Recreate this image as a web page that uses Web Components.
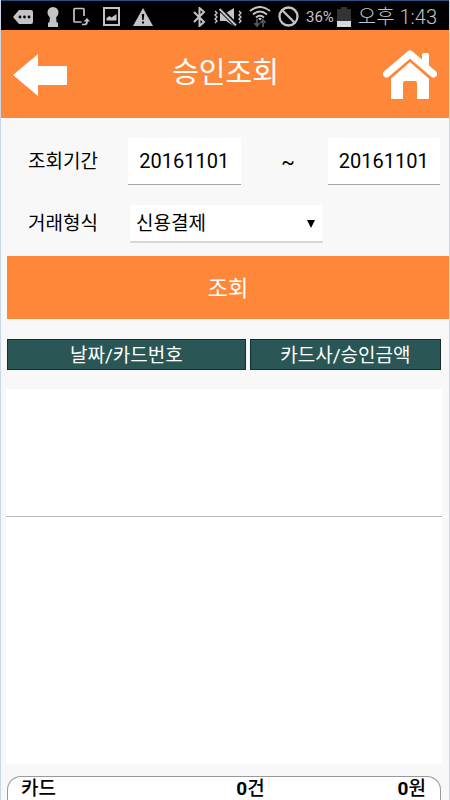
<!DOCTYPE html>
<html lang="ko">
<head>
<meta charset="utf-8">
<meta name="viewport" content="width=device-width, initial-scale=1">
<title>승인조회</title>
<style>
    body {
        margin: 0;
        background: #f8f8f8;
        color: #000;
        font-family: Roboto, "Noto Sans CJK KR", sans-serif;
        font-size: 20px;
    }
</style>
</head>
<body>
<approval-app></approval-app>

<template id="status-bar">
    <style>
        :host {
            display: flex;
            align-items: center;
            justify-content: space-between;
            box-sizing: border-box;
            height: 30px;
            padding: 2px 12px 0;
            background: #000;
            border-top: 1px solid #2a5082;
            color: #c4c4c4;
        }
        .group { display: flex; align-items: center; }
        .left { gap: 13px; }
        .right { gap: 7px; }
        .battery { display: flex; align-items: center; gap: 3px; }
        svg { display: block; fill: #c4c4c4; }
        .percent { font-size: 15px; line-height: 20px; }
        .time { font-size: 20px; line-height: 24px; font-weight: 300; }
    </style>
    <div class="group left">
        <svg width="20" height="14" viewBox="0 0 20 14"><path d="M6 0h12q2 0 2 2v10q0 2-2 2H6L0 7z"/><g fill="#000"><circle cx="7" cy="7" r="1.400"/><circle cx="11.500" cy="7" r="1.400"/><circle cx="16" cy="7" r="1.400"/></g></svg>
        <svg width="14" height="20" viewBox="0 0 14 20"><circle cx="7" cy="5.500" r="5.500"/><path d="M4 8h6l.5 7 1.500 1v4H2v-4l1.500-1z"/></svg>
        <svg width="17" height="19" viewBox="0 0 17 19"><path d="M11 9V2.500a1 1 0 0 0-1-1H2a1 1 0 0 0-1 1V14a1 1 0 0 0 1 1h6.500M9 17.500h2.500q2.500 0 2.500-3v-2" fill="none" stroke="#c4c4c4" stroke-width="1.700"/><path d="M10.500 14.500L14 11l3 3.500z"/></svg>
        <svg width="17" height="19" viewBox="0 0 17 19"><path fill-rule="evenodd" d="M0 0h17v19H0zM2 2v15h13V2z"/><path d="M3.500 13.500V11l3-2 2 1.500L13.500 7v6.500z"/></svg>
        <svg width="20" height="18" viewBox="0 0 20 18"><path d="M10 0l10 18H0z"/><path fill="#000" d="M8.800 6h2.400l-.5 6H9.300zM9 13.500h2v2H9z"/></svg>
    </div>
    <div class="group right">
        <svg width="15" height="20" viewBox="0 0 15 20"><path d="M2 5l10 10-4.500 4V1L12 5 2 15" fill="none" stroke="#c4c4c4" stroke-width="2"/></svg>
        <svg width="28" height="18" viewBox="0 0 28 18"><path d="M6 5h6l8-5v18l-8-5H6z"/><path d="M5 0l18 18" stroke="#000" stroke-width="4.500"/><path d="M5.500 1L22 17.500" stroke="#c4c4c4" stroke-width="2"/><path d="M1 3l2 2-2 2 2 2-2 2 2 2-2 2M25 3l2 2-2 2 2 2-2 2 2 2-2 2" fill="none" stroke="#c4c4c4" stroke-width="1.400"/></svg>
        <svg width="22" height="21" viewBox="0 0 22 21"><g fill="none" stroke="#c4c4c4" stroke-width="2"><path d="M1 5Q11-3 21 5M4 8.500q7-6 14 0M7 11.500q4-3.500 8 0"/></g><path d="M9 12.500q2-1.500 4 0l-2 2z"/><g fill="none" stroke="#555" stroke-width="1.800"><path d="M8 13v7M5.500 17l2.500 3 2.500-3M14 21v-7M11.500 17l2.500-3 2.500 3"/></g></svg>
        <svg width="21" height="21" viewBox="0 0 21 21"><g fill="none" stroke="#c4c4c4" stroke-width="2.300"><circle cx="10.500" cy="10.500" r="9"/><path d="M4 4l13 13"/></g></svg>
        <span class="battery">
            <span class="percent">36%</span>
            <svg width="14" height="20" viewBox="0 0 14 20"><path fill="#333" d="M4 0h6v2h4v18H0V2h4z"/><path fill="#d8d8d8" d="M0 14h14v6H0z"/></svg>
        </span>
        <span class="time">오후 1:43</span>
    </div>
</template>

<template id="title-bar">
    <style>
        :host {
            display: flex;
            align-items: center;
            justify-content: space-between;
            box-sizing: border-box;
            height: 88px;
            padding: 1px 12px 0;
            background: #ff873a;
            color: #fff;
        }
        h1 { margin: 0; font-size: 29px; line-height: 40px; font-weight: 400; padding-bottom: 3px; }
        button { padding: 0; border: 0; background: none; }
        svg { display: block; fill: #fff; }
    </style>
    <button type="button" aria-label="뒤로"><svg width="55" height="42" viewBox="0 0 55 42"><path d="M0 21L25 0v12h29v19H25v11z"/></svg></button>
    <h1><slot></slot></h1>
    <button type="button" aria-label="홈"><svg width="54" height="50" viewBox="0 0 54 50"><path d="M39 11V5q0-2 2-2h3q2 0 2 2v13z"/><path d="M3.500 24L27 4l23.500 20" fill="none" stroke="#fff" stroke-width="7" stroke-linecap="round" stroke-linejoin="round"/><path d="M8 28.500L27 12l19 16.500V48q0 1-1 1H34V33q0-2-2-2H22q-2 0-2 2v16H9q-1 0-1-1z"/><path d="M7 28L27 10.500 47 28" fill="none" stroke="#ff873a" stroke-width="1.800"/></svg></button>
</template>

<template id="search-form">
    <style>
        :host { display: block; padding: 20px 0 0 6px; }
        .row { display: grid; align-items: center; margin-bottom: 20px; padding: 0 9px 0 21px; }
        .period { grid-template-columns: 100px 1fr 87px 1fr; }
        .type { grid-template-columns: 102px 193px; margin-bottom: 13px; }
        label { font-size: 19px; line-height: 28px; }
        input, select {
            box-sizing: border-box;
            width: 100%;
            min-width: 0;
            margin: 0;
            border: 0;
            border-radius: 0;
            background: #fff;
            color: #000;
            font: inherit;
        }
        input { height: 47px; padding: 0; border-bottom: 1px solid #a5a5a5; text-align: center; }
        .tilde { padding-left: 8px; text-align: center; }
        .select { position: relative; }
        select { display: block; height: 38px; padding: 0 24px 0 6px; border-bottom: 2px solid #d6d6d6; appearance: none; font-size: 19px; }
        /* arrow lies over the select */
        .select svg { position: absolute; right: 8px; top: 15px; pointer-events: none; }
        button {
            display: block;
            width: 100%;
            height: 63px;
            padding: 0 0 3px;
            border: 0;
            background: #ff873a;
            color: #fff;
            font: inherit;
            font-size: 22px;
        }
    </style>
    <form>
        <div class="row period">
            <label for="from">조회기간</label>
            <input id="from" type="text" inputmode="numeric" value="20161101">
            <span class="tilde">~</span>
            <input id="to" type="text" inputmode="numeric" value="20161101" aria-label="종료일">
        </div>
        <div class="row type">
            <label for="kind">거래형식</label>
            <div class="select">
                <select id="kind"><option>신용결제</option></select>
                <svg width="8" height="8" viewBox="0 0 8 8"><path d="M0 0h8L4 8z"/></svg>
            </div>
        </div>
        <button type="submit">조회</button>
    </form>
</template>

<template id="result-list">
    <style>
        :host { display: flex; flex-direction: column; flex: 1; padding: 20px 7px 12px 5px; }
        table { margin: 0 1px 19px; table-layout: fixed; border-spacing: 0; }
        th {
            box-sizing: border-box;
            height: 31px;
            padding: 2px 0 0;
            background: #2a5655;
            border: 1px solid #10302f;
            color: #fff;
            font-size: 19px;
            line-height: 27px;
            font-weight: 400;
        }
        .date { width: 55%; }
        .gap { width: 4px; padding: 0; }
        .rows { flex: 1; background: #fff; }
        .item { height: 127px; border-bottom: 1px solid #bcbcbc; }
    </style>
    <table>
        <thead><tr><th class="date">날짜/카드번호</th><td class="gap"></td><th>카드사/승인금액</th></tr></thead>
    </table>
    <div class="rows"><div class="item"></div></div>
</template>

<template id="total-bar">
    <style>
        :host {
            display: grid;
            grid-template-columns: 1fr 1fr 1fr;
            margin: 0 8px 0 6px;
            padding: 0 14px 0 13px;
            border: 1px solid #999;
            border-bottom: 0;
            border-radius: 14px 14px 0 0;
            background: #fff;
            font-size: 19px;
            line-height: 23px;
            font-weight: 500;
        }
        .count { text-align: center; padding-left: 54px; }
        .sum { text-align: right; }
        b { font-weight: 700; }
    </style>
    <span><slot></slot></span>
    <span class="count"><b></b>건</span>
    <span class="sum"><b></b>원</span>
</template>

<template id="approval-app">
    <style>
        :host {
            display: flex;
            flex-direction: column;
            box-sizing: border-box;
            min-height: 100vh;
            border: 1px solid #ccd5e6;
            border-width: 0 1px;
        }
    </style>
    <status-bar></status-bar>
    <title-bar>승인조회</title-bar>
    <search-form></search-form>
    <result-list></result-list>
    <total-bar count="0" sum="0">카드</total-bar>
</template>

<script>
class BaseElement extends HTMLElement {
    constructor() {
        super();
        this.attachShadow({ mode: "open" });
        const template = document.getElementById(this.localName);
        this.shadowRoot.appendChild(template.content.cloneNode(true));
    }
}

class StatusBar extends BaseElement {}

class TitleBar extends BaseElement {}

class SearchForm extends BaseElement {
    connectedCallback() {
        this.form = this.shadowRoot.querySelector("form");
        this.form.addEventListener("submit", (e) => { e.preventDefault(); });
    }
}

class ResultList extends BaseElement {}

class TotalBar extends BaseElement {
    connectedCallback() {
        this.shadowRoot.querySelector(".count b").textContent = this.getAttribute("count");
        this.shadowRoot.querySelector(".sum b").textContent = this.getAttribute("sum");
    }
}

class ApprovalApp extends BaseElement {}

customElements.define("status-bar", StatusBar);
customElements.define("title-bar", TitleBar);
customElements.define("search-form", SearchForm);
customElements.define("result-list", ResultList);
customElements.define("total-bar", TotalBar);
customElements.define("approval-app", ApprovalApp);
</script>
</body>
</html>
